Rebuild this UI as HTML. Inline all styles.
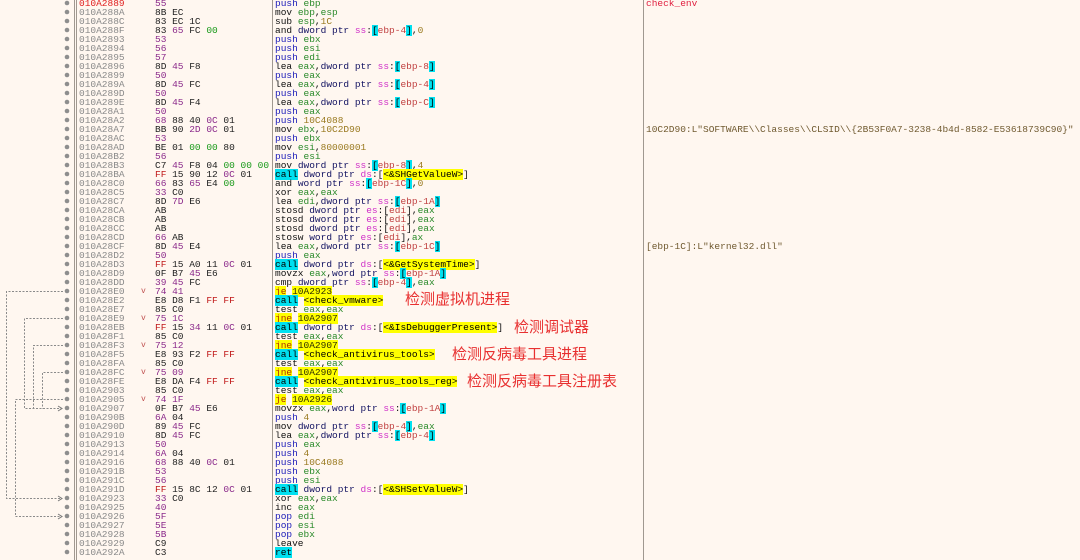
<!DOCTYPE html>
<html><head><meta charset="utf-8">
<style>
html,body{margin:0;padding:0;width:1080px;height:560px;overflow:hidden;background:#fff7f0;}
body{position:relative;font-family:"Liberation Mono",monospace;font-size:9.5px;}
.sep{position:absolute;top:0;height:560px;width:1px;background:#a09890;}
#rows{position:absolute;left:0;top:-1px;width:1080px;}
.r{position:relative;height:9px;line-height:9px;white-space:pre;}
.r>span{position:absolute;top:0;}
.a{left:79px;color:#8a8a8a;}
.a.red{color:#e02020;}
.b{left:155px;color:#222;}
.d{left:275px;color:#111;}
.cm{left:646px;color:#705a30;}
.v{left:141px;color:#c05050;font-size:8px;}
.P{color:#8b2a8b}.R{color:#c01818}.G{color:#1a9a1a}
.p{color:#1a1ab8}.g{color:#2a8a2a}.n{color:#9a7a20}.s{color:#d030c8}.t{color:#101060}
.o{background:#00e0f0;color:#000}.e{color:#c04040}
.c{background:#00e0f0;color:#000}
.j{background:#ffff00;color:#b03000}.jt{background:#ffff00;color:#303000}
.l{background:#ffff00;color:#000}
.zh{position:absolute;font-family:"Liberation Sans","Noto Sans CJK SC",sans-serif;font-size:15px;color:#e83030;line-height:16px;}
</style></head><body>
<div class="sep" style="left:74px"></div>
<div class="sep" style="left:76px"></div>
<div class="sep" style="left:272px"></div>
<div class="sep" style="left:643px"></div>
<svg width="80" height="560" style="position:absolute;left:0;top:0">
<g fill="#8e8e8e">
<circle cx="67" cy="3" r="2.3"/><circle cx="67" cy="12" r="2.3"/><circle cx="67" cy="21" r="2.3"/><circle cx="67" cy="30" r="2.3"/><circle cx="67" cy="39" r="2.3"/><circle cx="67" cy="48" r="2.3"/><circle cx="67" cy="57" r="2.3"/><circle cx="67" cy="66" r="2.3"/><circle cx="67" cy="75" r="2.3"/><circle cx="67" cy="84" r="2.3"/><circle cx="67" cy="93" r="2.3"/><circle cx="67" cy="102" r="2.3"/><circle cx="67" cy="111" r="2.3"/><circle cx="67" cy="120" r="2.3"/><circle cx="67" cy="129" r="2.3"/><circle cx="67" cy="138" r="2.3"/><circle cx="67" cy="147" r="2.3"/><circle cx="67" cy="156" r="2.3"/><circle cx="67" cy="165" r="2.3"/><circle cx="67" cy="174" r="2.3"/><circle cx="67" cy="183" r="2.3"/><circle cx="67" cy="192" r="2.3"/><circle cx="67" cy="201" r="2.3"/><circle cx="67" cy="210" r="2.3"/><circle cx="67" cy="219" r="2.3"/><circle cx="67" cy="228" r="2.3"/><circle cx="67" cy="237" r="2.3"/><circle cx="67" cy="246" r="2.3"/><circle cx="67" cy="255" r="2.3"/><circle cx="67" cy="264" r="2.3"/><circle cx="67" cy="273" r="2.3"/><circle cx="67" cy="282" r="2.3"/><circle cx="67" cy="291" r="2.3"/><circle cx="67" cy="300" r="2.3"/><circle cx="67" cy="309" r="2.3"/><circle cx="67" cy="318" r="2.3"/><circle cx="67" cy="327" r="2.3"/><circle cx="67" cy="336" r="2.3"/><circle cx="67" cy="345" r="2.3"/><circle cx="67" cy="354" r="2.3"/><circle cx="67" cy="363" r="2.3"/><circle cx="67" cy="372" r="2.3"/><circle cx="67" cy="381" r="2.3"/><circle cx="67" cy="390" r="2.3"/><circle cx="67" cy="399" r="2.3"/><circle cx="67" cy="408" r="2.3"/><circle cx="67" cy="417" r="2.3"/><circle cx="67" cy="426" r="2.3"/><circle cx="67" cy="435" r="2.3"/><circle cx="67" cy="444" r="2.3"/><circle cx="67" cy="453" r="2.3"/><circle cx="67" cy="462" r="2.3"/><circle cx="67" cy="471" r="2.3"/><circle cx="67" cy="480" r="2.3"/><circle cx="67" cy="489" r="2.3"/><circle cx="67" cy="498" r="2.3"/><circle cx="67" cy="507" r="2.3"/><circle cx="67" cy="516" r="2.3"/><circle cx="67" cy="525" r="2.3"/><circle cx="67" cy="534" r="2.3"/><circle cx="67" cy="543" r="2.3"/><circle cx="67" cy="552" r="2.3"/>
</g>
<g fill="none" stroke="#8a8a8a" stroke-width="1" stroke-dasharray="2,1.5">
<path d="M63 291.5H6.5V498.5H61"/>
<path d="M63 318.5H24.5V408.5H61"/>
<path d="M63 345.5H33.5V408.5"/>
<path d="M63 372.5H42.5V408.5"/>
<path d="M63 399.5H15.5V516.5H61"/>
</g>
<g fill="none" stroke="#777" stroke-width="1">
<path d="M58 406L62 408.5L58 411"/><path d="M58 496L62 498.5L58 501"/><path d="M58 514L62 516.5L58 519"/>
</g>
</svg>
<div id="rows">
<div class="r"><span class="a red">010A2889</span><span class="b P">55</span><span class="d"><span class="p">push</span> <span class="g">ebp</span></span><span class="cm" style="color:#e02040">check_env</span></div>
<div class="r"><span class="a">010A288A</span><span class="b">8B EC</span><span class="d">mov <span class="g">ebp</span>,<span class="g">esp</span></span></div>
<div class="r"><span class="a">010A288C</span><span class="b">83 EC 1C</span><span class="d">sub <span class="g">esp</span>,<span class="n">1C</span></span></div>
<div class="r"><span class="a">010A288F</span><span class="b">83 <span class="P">65</span> FC <span class="G">00</span></span><span class="d">and <span class="t">dword ptr</span> <span class="s">ss</span>:<span class="o">[</span><span class="e">ebp-4</span><span class="o">]</span>,<span class="n">0</span></span></div>
<div class="r"><span class="a">010A2893</span><span class="b P">53</span><span class="d"><span class="p">push</span> <span class="g">ebx</span></span></div>
<div class="r"><span class="a">010A2894</span><span class="b P">56</span><span class="d"><span class="p">push</span> <span class="g">esi</span></span></div>
<div class="r"><span class="a">010A2895</span><span class="b P">57</span><span class="d"><span class="p">push</span> <span class="g">edi</span></span></div>
<div class="r"><span class="a">010A2896</span><span class="b">8D <span class="P">45</span> F8</span><span class="d">lea <span class="g">eax</span>,<span class="t">dword ptr</span> <span class="s">ss</span>:<span class="o">[</span><span class="e">ebp-8</span><span class="o">]</span></span></div>
<div class="r"><span class="a">010A2899</span><span class="b P">50</span><span class="d"><span class="p">push</span> <span class="g">eax</span></span></div>
<div class="r"><span class="a">010A289A</span><span class="b">8D <span class="P">45</span> FC</span><span class="d">lea <span class="g">eax</span>,<span class="t">dword ptr</span> <span class="s">ss</span>:<span class="o">[</span><span class="e">ebp-4</span><span class="o">]</span></span></div>
<div class="r"><span class="a">010A289D</span><span class="b P">50</span><span class="d"><span class="p">push</span> <span class="g">eax</span></span></div>
<div class="r"><span class="a">010A289E</span><span class="b">8D <span class="P">45</span> F4</span><span class="d">lea <span class="g">eax</span>,<span class="t">dword ptr</span> <span class="s">ss</span>:<span class="o">[</span><span class="e">ebp-C</span><span class="o">]</span></span></div>
<div class="r"><span class="a">010A28A1</span><span class="b P">50</span><span class="d"><span class="p">push</span> <span class="g">eax</span></span></div>
<div class="r"><span class="a">010A28A2</span><span class="b"><span class="P">68</span> 88 40 <span class="P">0C</span> 01</span><span class="d"><span class="p">push</span> <span class="n">10C4088</span></span></div>
<div class="r"><span class="a">010A28A7</span><span class="b">BB 90 <span class="P">2D</span> <span class="P">0C</span> 01</span><span class="d">mov <span class="g">ebx</span>,<span class="n">10C2D90</span></span><span class="cm">10C2D90:L"SOFTWARE\\Classes\\CLSID\\{2B53F0A7-3238-4b4d-8582-E53618739C90}"</span></div>
<div class="r"><span class="a">010A28AC</span><span class="b P">53</span><span class="d"><span class="p">push</span> <span class="g">ebx</span></span></div>
<div class="r"><span class="a">010A28AD</span><span class="b">BE 01 <span class="G">00</span> <span class="G">00</span> 80</span><span class="d">mov <span class="g">esi</span>,<span class="n">80000001</span></span></div>
<div class="r"><span class="a">010A28B2</span><span class="b P">56</span><span class="d"><span class="p">push</span> <span class="g">esi</span></span></div>
<div class="r"><span class="a">010A28B3</span><span class="b">C7 <span class="P">45</span> F8 04 <span class="G">00</span> <span class="G">00</span> <span class="G">00</span></span><span class="d">mov <span class="t">dword ptr</span> <span class="s">ss</span>:<span class="o">[</span><span class="e">ebp-8</span><span class="o">]</span>,<span class="n">4</span></span></div>
<div class="r"><span class="a">010A28BA</span><span class="b"><span class="R">FF</span> 15 90 12 <span class="P">0C</span> 01</span><span class="d"><span class="c">call</span> <span class="t">dword ptr</span> <span class="s">ds</span>:[<span class="l">&lt;&amp;SHGetValueW&gt;</span>]</span></div>
<div class="r"><span class="a">010A28C0</span><span class="b"><span class="P">66</span> 83 <span class="P">65</span> E4 <span class="G">00</span></span><span class="d">and <span class="t">word ptr</span> <span class="s">ss</span>:<span class="o">[</span><span class="e">ebp-1C</span><span class="o">]</span>,<span class="n">0</span></span></div>
<div class="r"><span class="a">010A28C5</span><span class="b"><span class="P">33</span> C0</span><span class="d">xor <span class="g">eax</span>,<span class="g">eax</span></span></div>
<div class="r"><span class="a">010A28C7</span><span class="b">8D <span class="P">7D</span> E6</span><span class="d">lea <span class="g">edi</span>,<span class="t">dword ptr</span> <span class="s">ss</span>:<span class="o">[</span><span class="e">ebp-1A</span><span class="o">]</span></span></div>
<div class="r"><span class="a">010A28CA</span><span class="b">AB</span><span class="d">stosd <span class="t">dword ptr</span> <span class="s">es</span>:[<span class="e">edi</span>],<span class="g">eax</span></span></div>
<div class="r"><span class="a">010A28CB</span><span class="b">AB</span><span class="d">stosd <span class="t">dword ptr</span> <span class="s">es</span>:[<span class="e">edi</span>],<span class="g">eax</span></span></div>
<div class="r"><span class="a">010A28CC</span><span class="b">AB</span><span class="d">stosd <span class="t">dword ptr</span> <span class="s">es</span>:[<span class="e">edi</span>],<span class="g">eax</span></span></div>
<div class="r"><span class="a">010A28CD</span><span class="b"><span class="P">66</span> AB</span><span class="d">stosw <span class="t">word ptr</span> <span class="s">es</span>:[<span class="e">edi</span>],<span class="g">ax</span></span></div>
<div class="r"><span class="a">010A28CF</span><span class="b">8D <span class="P">45</span> E4</span><span class="d">lea <span class="g">eax</span>,<span class="t">dword ptr</span> <span class="s">ss</span>:<span class="o">[</span><span class="e">ebp-1C</span><span class="o">]</span></span><span class="cm">[ebp-1C]:L"kernel32.dll"</span></div>
<div class="r"><span class="a">010A28D2</span><span class="b P">50</span><span class="d"><span class="p">push</span> <span class="g">eax</span></span></div>
<div class="r"><span class="a">010A28D3</span><span class="b"><span class="R">FF</span> 15 A0 11 <span class="P">0C</span> 01</span><span class="d"><span class="c">call</span> <span class="t">dword ptr</span> <span class="s">ds</span>:[<span class="l">&lt;&amp;GetSystemTime&gt;</span>]</span></div>
<div class="r"><span class="a">010A28D9</span><span class="b">0F B7 <span class="P">45</span> E6</span><span class="d">movzx <span class="g">eax</span>,<span class="t">word ptr</span> <span class="s">ss</span>:<span class="o">[</span><span class="e">ebp-1A</span><span class="o">]</span></span></div>
<div class="r"><span class="a">010A28DD</span><span class="b"><span class="P">39</span> <span class="P">45</span> FC</span><span class="d">cmp <span class="t">dword ptr</span> <span class="s">ss</span>:<span class="o">[</span><span class="e">ebp-4</span><span class="o">]</span>,<span class="g">eax</span></span></div>
<div class="r"><span class="a">010A28E0</span><span class="v">v</span><span class="b P">74 41</span><span class="d"><span class="j">je</span> <span class="jt">10A2923</span></span></div>
<div class="r"><span class="a">010A28E2</span><span class="b">E8 D8 F1 <span class="R">FF</span> <span class="R">FF</span></span><span class="d"><span class="c">call</span> <span class="l">&lt;check_vmware&gt;</span></span></div>
<div class="r"><span class="a">010A28E7</span><span class="b">85 C0</span><span class="d">test <span class="g">eax</span>,<span class="g">eax</span></span></div>
<div class="r"><span class="a">010A28E9</span><span class="v">v</span><span class="b P">75 1C</span><span class="d"><span class="j">jne</span> <span class="jt">10A2907</span></span></div>
<div class="r"><span class="a">010A28EB</span><span class="b"><span class="R">FF</span> 15 <span class="P">34</span> 11 <span class="P">0C</span> 01</span><span class="d"><span class="c">call</span> <span class="t">dword ptr</span> <span class="s">ds</span>:[<span class="l">&lt;&amp;IsDebuggerPresent&gt;</span>]</span></div>
<div class="r"><span class="a">010A28F1</span><span class="b">85 C0</span><span class="d">test <span class="g">eax</span>,<span class="g">eax</span></span></div>
<div class="r"><span class="a">010A28F3</span><span class="v">v</span><span class="b P">75 12</span><span class="d"><span class="j">jne</span> <span class="jt">10A2907</span></span></div>
<div class="r"><span class="a">010A28F5</span><span class="b">E8 93 F2 <span class="R">FF</span> <span class="R">FF</span></span><span class="d"><span class="c">call</span> <span class="l">&lt;check_antivirus_tools&gt;</span></span></div>
<div class="r"><span class="a">010A28FA</span><span class="b">85 C0</span><span class="d">test <span class="g">eax</span>,<span class="g">eax</span></span></div>
<div class="r"><span class="a">010A28FC</span><span class="v">v</span><span class="b P">75 09</span><span class="d"><span class="j">jne</span> <span class="jt">10A2907</span></span></div>
<div class="r"><span class="a">010A28FE</span><span class="b">E8 DA F4 <span class="R">FF</span> <span class="R">FF</span></span><span class="d"><span class="c">call</span> <span class="l">&lt;check_antivirus_tools_reg&gt;</span></span></div>
<div class="r"><span class="a">010A2903</span><span class="b">85 C0</span><span class="d">test <span class="g">eax</span>,<span class="g">eax</span></span></div>
<div class="r"><span class="a">010A2905</span><span class="v">v</span><span class="b P">74 1F</span><span class="d"><span class="j">je</span> <span class="jt">10A2926</span></span></div>
<div class="r"><span class="a">010A2907</span><span class="b">0F B7 <span class="P">45</span> E6</span><span class="d">movzx <span class="g">eax</span>,<span class="t">word ptr</span> <span class="s">ss</span>:<span class="o">[</span><span class="e">ebp-1A</span><span class="o">]</span></span></div>
<div class="r"><span class="a">010A290B</span><span class="b"><span class="P">6A</span> 04</span><span class="d"><span class="p">push</span> <span class="n">4</span></span></div>
<div class="r"><span class="a">010A290D</span><span class="b">89 <span class="P">45</span> FC</span><span class="d">mov <span class="t">dword ptr</span> <span class="s">ss</span>:<span class="o">[</span><span class="e">ebp-4</span><span class="o">]</span>,<span class="g">eax</span></span></div>
<div class="r"><span class="a">010A2910</span><span class="b">8D <span class="P">45</span> FC</span><span class="d">lea <span class="g">eax</span>,<span class="t">dword ptr</span> <span class="s">ss</span>:<span class="o">[</span><span class="e">ebp-4</span><span class="o">]</span></span></div>
<div class="r"><span class="a">010A2913</span><span class="b P">50</span><span class="d"><span class="p">push</span> <span class="g">eax</span></span></div>
<div class="r"><span class="a">010A2914</span><span class="b"><span class="P">6A</span> 04</span><span class="d"><span class="p">push</span> <span class="n">4</span></span></div>
<div class="r"><span class="a">010A2916</span><span class="b"><span class="P">68</span> 88 40 <span class="P">0C</span> 01</span><span class="d"><span class="p">push</span> <span class="n">10C4088</span></span></div>
<div class="r"><span class="a">010A291B</span><span class="b P">53</span><span class="d"><span class="p">push</span> <span class="g">ebx</span></span></div>
<div class="r"><span class="a">010A291C</span><span class="b P">56</span><span class="d"><span class="p">push</span> <span class="g">esi</span></span></div>
<div class="r"><span class="a">010A291D</span><span class="b"><span class="R">FF</span> 15 8C 12 <span class="P">0C</span> 01</span><span class="d"><span class="c">call</span> <span class="t">dword ptr</span> <span class="s">ds</span>:[<span class="l">&lt;&amp;SHSetValueW&gt;</span>]</span></div>
<div class="r"><span class="a">010A2923</span><span class="b"><span class="P">33</span> C0</span><span class="d">xor <span class="g">eax</span>,<span class="g">eax</span></span></div>
<div class="r"><span class="a">010A2925</span><span class="b P">40</span><span class="d">inc <span class="g">eax</span></span></div>
<div class="r"><span class="a">010A2926</span><span class="b P">5F</span><span class="d"><span class="p">pop</span> <span class="g">edi</span></span></div>
<div class="r"><span class="a">010A2927</span><span class="b P">5E</span><span class="d"><span class="p">pop</span> <span class="g">esi</span></span></div>
<div class="r"><span class="a">010A2928</span><span class="b P">5B</span><span class="d"><span class="p">pop</span> <span class="g">ebx</span></span></div>
<div class="r"><span class="a">010A2929</span><span class="b">C9</span><span class="d">leave</span></div>
<div class="r"><span class="a">010A292A</span><span class="b">C3</span><span class="d"><span class="c">ret</span></span></div>
</div>
<div class="zh" style="left:405px;top:292px">检测虚拟机进程</div>
<div class="zh" style="left:514px;top:320px">检测调试器</div>
<div class="zh" style="left:452px;top:347px">检测反病毒工具进程</div>
<div class="zh" style="left:467px;top:374px">检测反病毒工具注册表</div>
</body></html>
